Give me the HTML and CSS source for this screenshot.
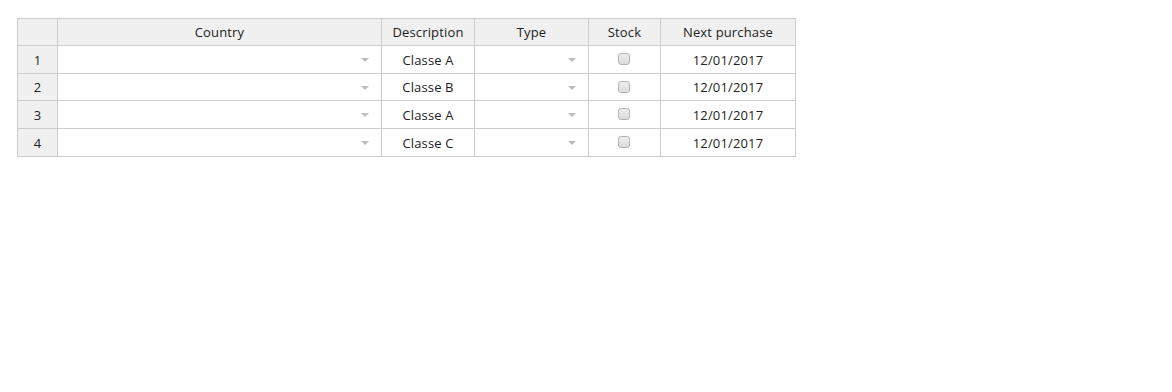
FILE: index.html
```html
<!DOCTYPE html>
<html lang="en">

<head>
    <meta charset="UTF-8">
    <title>Grid</title>
    <link rel="stylesheet" href="styles.css">
</head>

<body>
    <table class="grid">
        <colgroup>
            <col class="c-row">
            <col class="c-country">
            <col class="c-desc">
            <col class="c-type">
            <col class="c-stock">
            <col class="c-next">
        </colgroup>
        <thead>
            <tr>
                <th></th>
                <th>Country</th>
                <th>Description</th>
                <th>Type</th>
                <th>Stock</th>
                <th>Next purchase</th>
            </tr>
        </thead>
        <tbody>
            <tr>
                <th>1</th>
                <td class="drop"><span class="arrow"></span></td>
                <td>Classe A</td>
                <td class="drop"><span class="arrow"></span></td>
                <td><span class="check"></span></td>
                <td>12/01/2017</td>
            </tr>
            <tr class="short">
                <th>2</th>
                <td class="drop"><span class="arrow"></span></td>
                <td>Classe B</td>
                <td class="drop"><span class="arrow"></span></td>
                <td><span class="check"></span></td>
                <td>12/01/2017</td>
            </tr>
            <tr>
                <th>3</th>
                <td class="drop"><span class="arrow"></span></td>
                <td>Classe A</td>
                <td class="drop"><span class="arrow"></span></td>
                <td><span class="check"></span></td>
                <td>12/01/2017</td>
            </tr>
            <tr>
                <th>4</th>
                <td class="drop"><span class="arrow"></span></td>
                <td>Classe C</td>
                <td class="drop"><span class="arrow"></span></td>
                <td><span class="check"></span></td>
                <td>12/01/2017</td>
            </tr>
        </tbody>
    </table>
</body>

</html>
```

FILE: styles.css
```css
body {
    margin: 0;
    padding: 18px 0 0 17px;
    background-color: white;
    font-family: "Open Sans", "Liberation Sans", sans-serif;
    font-size: 13px;
    color: #222;
}

* {
    box-sizing: border-box;
}

.grid {
    border-collapse: separate;
    border-spacing: 0;
    table-layout: fixed;
    width: 779px;
    border-top: 1px solid #ccc;
    border-left: 1px solid #ccc;
}

.c-row { width: 40px; }
.c-country { width: 324px; }
.c-desc { width: 93px; }
.c-type { width: 114px; }
.c-stock { width: 72px; }
.c-next { width: 135px; }

.grid th,
.grid td {
    height: 28px;
    padding: 0 4px;
    border-right: 1px solid #ccc;
    border-bottom: 1px solid #ccc;
    text-align: center;
    vertical-align: middle;
    font-weight: normal;
    white-space: nowrap;
    line-height: 20px;
    letter-spacing: 0.15px;
}

.grid thead th {
    height: 27px;
    background-color: #f0f0f0;
}

.grid tbody th {
    background-color: #f0f0f0;
}

.grid tr.short th,
.grid tr.short td {
    height: 27px;
}

.grid td.drop {
    text-align: right;
    padding-right: 12px;
}

.arrow {
    display: inline-block;
    width: 0;
    height: 0;
    margin-top: -2px;
    border-left: 4px solid transparent;
    border-right: 4px solid transparent;
    border-top: 4px solid #bcbcbc;
    vertical-align: middle;
}

.check {
    display: inline-block;
    width: 12px;
    height: 12px;
    margin: -4px 2px 0 0;
    border: 1px solid #b4b4b4;
    border-radius: 3px;
    background: linear-gradient(#ededed, #dcdcdc);
    vertical-align: middle;
}
```
